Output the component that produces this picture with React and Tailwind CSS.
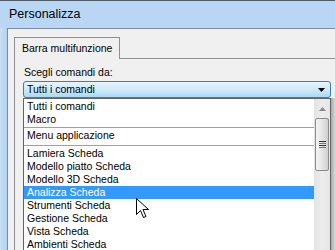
export default function App() {
  const items1 = ["Tutti i comandi", "Macro"];
  const items3 = [
    "Lamiera Scheda",
    "Modello piatto Scheda",
    "Modello 3D Scheda",
    "Analizza Scheda",
    "Strumenti Scheda",
    "Gestione Scheda",
    "Vista Scheda",
    "Ambienti Scheda",
  ];
  const row = (t, sel) => (
    <div
      key={t}
      className={
        "h-[13px] leading-[13px] pl-[3px] whitespace-nowrap " +
        (sel ? "bg-[#3399ff] text-white" : "text-black")
      }
    >
      {t}
    </div>
  );
  return (
    <div className="relative w-[335px] h-[250px] overflow-hidden bg-[#b9d7f5] border-t border-[#4f5d6b] flex flex-col font-['Liberation_Sans',sans-serif] text-[10.5px]">
      <div className="h-[27px] shrink-0 pl-[9px] flex items-center text-[12.5px] text-black">
        Personalizza
      </div>
      <div className="flex-1 flex min-h-0">
        <div className="w-[7px] shrink-0 bg-gradient-to-r from-[#c9e0f6] to-[#b3d2f0]" />
        <div className="flex-1 min-w-0 flex flex-col border-l border-t border-[#7d8a98] bg-[#f0f0f0] pt-[7px] pl-[6px]">
          <div className="flex">
            <div className="w-[106px] h-[22px] border border-b-0 border-[#8e8f8f] bg-[#f0f0f0] pl-[7px] flex items-center relative top-px z-10">
              Barra multifunzione
            </div>
          </div>
          <div className="flex-1 min-h-0 border-l border-t border-[#8e8f8f] pl-[8px] flex flex-col">
            <div className="h-[22px] shrink-0 pl-[1px] flex items-center pt-[5px]">
              Scegli comandi da:
            </div>
            <div className="h-[17px] shrink-0 w-[308px] rounded-[3px] border border-[#3c7fb1] bg-gradient-to-b from-[#e7f4fc] via-[#cfeafa] to-[#a9d9f5] flex items-center pl-[3px] pr-[5px] justify-between">
              <span>Tutti i comandi</span>
              <svg width="7" height="4" viewBox="0 0 7 4">
                <path d="M0 0H7L3.5 4Z" fill="#000" />
              </svg>
            </div>
            <div className="flex-1 min-h-0 flex">
              <div className="w-[308px] border-l border-r border-t border-[#646464] bg-white flex">
                <div className="flex-1 min-w-0 pt-[1px]">
                  {items1.map((t) => row(t))}
                  <div className="mt-[1px] h-px bg-[#a0a0a0]" />
                  <div className="mt-px">{row("Menu applicazione")}</div>
                  <div className="mt-[3px] h-px bg-[#a0a0a0]" />
                  <div className="mt-[1px]">
                    {items3.map((t) => row(t, t === "Analizza Scheda"))}
                  </div>
                </div>
                <div className="w-[16px] shrink-0 bg-gradient-to-r from-[#e3e3e3] via-[#ececec] to-[#e6e6e6] flex flex-col items-center">
                  <div className="h-[19px] flex items-center justify-center">
                    <svg width="7" height="4" viewBox="0 0 7 4">
                      <path d="M0 4H7L3.5 0Z" fill="#8a8a8a" />
                    </svg>
                  </div>
                  <div className="w-[14px] h-[53px] rounded-[2px] border border-[#8c8c8c] bg-gradient-to-r from-[#f4f4f4] via-[#e6e6e6] to-[#cfcfcf] flex flex-col items-center justify-center gap-[1px]">
                    <div className="w-[7px] h-px bg-[#333]" />
                    <div className="w-[7px] h-px bg-[#777]" />
                    <div className="w-[7px] h-px bg-[#333]" />
                    <div className="w-[7px] h-px bg-[#777]" />
                  </div>
                </div>
              </div>
              <div className="w-[4px] bg-gradient-to-r from-[#a8a8a8] to-[#d8d8d8]" />
            </div>
          </div>
        </div>
      </div>
      <svg
        className="absolute left-[136px] top-[197px]"
        width="13"
        height="20"
        viewBox="0 0 13 20"
      >
        <path
          d="M0.5 0.5V16.5L4.5 12.5L7.5 19.5L10 18.5L7 11.5H12.5Z"
          fill="#fff"
          stroke="#000"
          strokeWidth="1"
          strokeLinejoin="miter"
        />
      </svg>
    </div>
  );
}
